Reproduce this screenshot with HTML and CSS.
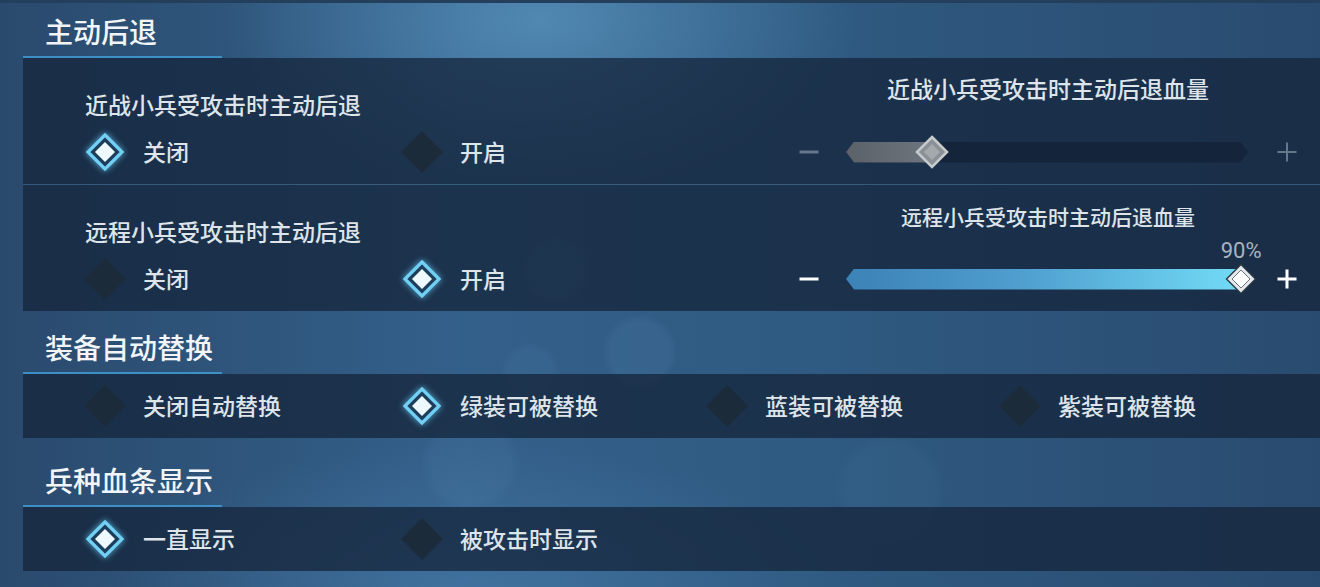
FILE: index.html
```html
<!DOCTYPE html>
<html lang="zh-CN">
<head>
<meta charset="utf-8">
<title>设置</title>
<link rel="stylesheet" href="styles.css">
</head>
<body>
<div class="page">
  <section class="section">
    <div class="sec-head">主动后退</div>
    <div class="panel">
      <div class="row sep">
        <div class="left">
          <div class="label">近战小兵受攻击时主动后退</div>
          <div class="options">
            <div class="opt"><span class="dia"><svg class="sel" width="40" height="40" viewBox="0 0 40 40"><polygon points="20,3 37,20 20,37 3,20" fill="#1d3e5b" stroke="#72d0f4" stroke-width="3.2"/><polygon points="20,10 30,20 20,30 10,20" fill="#eef9ff"/></svg></span><span class="txt">关闭</span></div>
            <div class="opt"><span class="dia"><svg width="44" height="44" viewBox="0 0 44 44"><polygon points="22,1 43,22 22,43 1,22" fill="#1b2b3a"/></svg></span><span class="txt">开启</span></div>
          </div>
        </div>
        <div class="right">
          <div class="s-title big">近战小兵受攻击时主动后退血量</div>
          <div class="slider dim">
            <span class="minus"></span>
            <div class="track" style="--pct:21.4%">
              <div class="shape"><div class="fill"></div></div>
              <div class="thumb"><svg width="34" height="34" viewBox="0 0 34 34"><polygon points="17,2 32,17 17,32 2,17" fill="#8a9096" stroke="#c6cacd" stroke-width="2.6"/><polygon points="17,9 25,17 17,25 9,17" fill="#a4a9ae"/></svg></div>
            </div>
            <span class="plus"></span>
          </div>
        </div>
      </div>
      <div class="row">
        <div class="left">
          <div class="label">远程小兵受攻击时主动后退</div>
          <div class="options">
            <div class="opt"><span class="dia"><svg width="44" height="44" viewBox="0 0 44 44"><polygon points="22,1 43,22 22,43 1,22" fill="#1b2b3a"/></svg></span><span class="txt">关闭</span></div>
            <div class="opt"><span class="dia"><svg class="sel" width="40" height="40" viewBox="0 0 40 40"><polygon points="20,3 37,20 20,37 3,20" fill="#1d3e5b" stroke="#72d0f4" stroke-width="3.2"/><polygon points="20,10 30,20 20,30 10,20" fill="#eef9ff"/></svg></span><span class="txt">开启</span></div>
          </div>
        </div>
        <div class="right">
          <div class="s-title small">远程小兵受攻击时主动后退血量</div>
          <div class="slider">
            <span class="minus"></span>
            <div class="track" style="--pct:98.3%">
              <div class="shape"><div class="fill"></div></div>
              <div class="thumb"><span class="val">90%</span><svg width="34" height="34" viewBox="0 0 34 34"><polygon points="17,1.5 32.5,17 17,32.5 1.5,17" fill="#2b3946"/><polygon points="17,3.5 30.5,17 17,30.5 3.5,17" fill="#e4e8eb"/><polygon points="17,8 26,17 17,26 8,17" fill="#ffffff" stroke="#6b7782" stroke-width="1"/></svg></div>
            </div>
            <span class="plus"></span>
          </div>
        </div>
      </div>
    </div>
  </section>

  <section class="section">
    <div class="sec-head">装备自动替换</div>
    <div class="panel pad">
      <div class="options">
        <div class="opt"><span class="dia"><svg width="44" height="44" viewBox="0 0 44 44"><polygon points="22,1 43,22 22,43 1,22" fill="#1b2b3a"/></svg></span><span class="txt">关闭自动替换</span></div>
        <div class="opt"><span class="dia"><svg class="sel" width="40" height="40" viewBox="0 0 40 40"><polygon points="20,3 37,20 20,37 3,20" fill="#1d3e5b" stroke="#72d0f4" stroke-width="3.2"/><polygon points="20,10 30,20 20,30 10,20" fill="#eef9ff"/></svg></span><span class="txt">绿装可被替换</span></div>
        <div class="opt"><span class="dia"><svg width="44" height="44" viewBox="0 0 44 44"><polygon points="22,1 43,22 22,43 1,22" fill="#1b2b3a"/></svg></span><span class="txt">蓝装可被替换</span></div>
        <div class="opt"><span class="dia"><svg width="44" height="44" viewBox="0 0 44 44"><polygon points="22,1 43,22 22,43 1,22" fill="#1b2b3a"/></svg></span><span class="txt">紫装可被替换</span></div>
      </div>
    </div>
  </section>

  <section class="section s3">
    <div class="sec-head">兵种血条显示</div>
    <div class="panel pad">
      <div class="options">
        <div class="opt"><span class="dia"><svg class="sel" width="40" height="40" viewBox="0 0 40 40"><polygon points="20,3 37,20 20,37 3,20" fill="#1d3e5b" stroke="#72d0f4" stroke-width="3.2"/><polygon points="20,10 30,20 20,30 10,20" fill="#eef9ff"/></svg></span><span class="txt">一直显示</span></div>
        <div class="opt"><span class="dia"><svg width="44" height="44" viewBox="0 0 44 44"><polygon points="22,1 43,22 22,43 1,22" fill="#1b2b3a"/></svg></span><span class="txt">被攻击时显示</span></div>
      </div>
    </div>
  </section>
</div>
</body>
</html>
```

FILE: styles.css
```css
html, body {
  margin: 0;
  padding: 0;
}

body {
  width: 1320px;
  height: 587px;
  overflow: hidden;
  box-sizing: border-box;
  border-top: 3px solid #233f5c;
  font-family: "Noto Sans CJK SC", "Noto Sans", sans-serif;
  font-weight: 500;
  color: #dde4ea;
  background:
    radial-gradient(circle at 556px 270px, rgba(130, 185, 225, 0.09) 0 28px, transparent 36px),
    radial-gradient(circle at 640px 352px, rgba(130, 185, 225, 0.08) 0 30px, transparent 38px),
    radial-gradient(circle at 530px 372px, rgba(130, 185, 225, 0.06) 0 22px, transparent 30px),
    radial-gradient(circle at 470px 462px, rgba(130, 185, 225, 0.06) 0 40px, transparent 50px),
    radial-gradient(circle at 890px 490px, rgba(130, 185, 225, 0.04) 0 45px, transparent 56px),
    radial-gradient(ellipse 440px 240px at 540px 20px, rgba(105, 170, 212, 0.55), transparent 72%),
    radial-gradient(ellipse 520px 220px at 470px 600px, rgba(90, 150, 200, 0.35), transparent 72%),
    linear-gradient(90deg, #2a4a6d 0%, #33608a 35%, #2f5a81 62%, #2a4b70 100%);
}

.page {
  padding: 7px 0 0 23px;
}

.section + .section {
  margin-top: 15px;
}

.section.s3 {
  margin-top: 21px;
}

.sec-head {
  width: 177px;
  padding-left: 22px;
  height: 42px;
  padding-bottom: 4px;
  line-height: 42px;
  font-size: 28px;
  font-weight: 500;
  color: #f1f5f8;
  border-bottom: 2px solid #3d8fc5;
}

.panel {
  background: rgba(21, 37, 59, 0.76);
}

.panel.pad {
  padding: 10px 0 10px 62px;
}

.row {
  display: grid;
  grid-template-columns: 709px 508px;
  padding: 0 0 10px 62px;
}

.row.sep {
  border-bottom: 1px solid rgba(78, 128, 172, 0.55);
}

.left {
  padding-top: 31px;
}

.label {
  font-size: 23px;
  line-height: 30px;
  margin-bottom: 11px;
}

.options {
  display: grid;
  grid-template-columns: 317px 305px 293px auto;
}

.opt {
  display: flex;
  align-items: center;
  gap: 18px;
  height: 44px;
  font-size: 23px;
  line-height: 30px;
}

.txt {
  padding-bottom: 3px;
}

.dia {
  width: 40px;
  height: 44px;
  display: flex;
  align-items: center;
  justify-content: center;
  flex: none;
}

.dia svg {
  flex: none;
}

.dia svg.sel {
  filter: drop-shadow(0 0 3px rgba(100, 205, 245, 0.85));
}

.right {
  display: flex;
  flex-direction: column;
  align-items: center;
  justify-content: flex-end;
}

.s-title.big {
  font-size: 23px;
  line-height: 30px;
  margin-bottom: 27px;
}

.s-title.small {
  font-size: 21px;
  line-height: 28px;
  margin-bottom: 27px;
}

.slider {
  display: flex;
  align-items: center;
  width: 508px;
  height: 44px;
}

.minus, .plus {
  width: 30px;
  height: 30px;
  flex: none;
  position: relative;
}

.minus::before, .plus::before, .plus::after {
  content: "";
  position: absolute;
  left: 50%;
  top: 50%;
  background: #ffffff;
  transform: translate(-50%, -50%);
}

.minus::before, .plus::before {
  width: 19px;
  height: 3px;
}

.plus::after {
  width: 3px;
  height: 19px;
}

.dim .minus::before, .dim .plus::before, .dim .plus::after {
  background: #65788a;
}

.dim .plus::before {
  height: 2px;
}

.dim .plus::after {
  width: 2px;
}

.minus {
  margin-right: 22px;
}

.plus {
  margin-left: 24px;
}

.track {
  position: relative;
  width: 402px;
  height: 21px;
  flex: none;
}

.shape {
  width: 100%;
  height: 100%;
  background: #14243a;
  clip-path: polygon(8px 0, calc(100% - 8px) 0, 100% 50%, calc(100% - 8px) 100%, 8px 100%, 0 50%);
}

.fill {
  width: var(--pct);
  height: 100%;
  background: linear-gradient(90deg, #3c82b6 0%, #4f9fcf 45%, #72dbf6 100%);
}

.dim .fill {
  background: linear-gradient(90deg, #5a6168 0%, #6f757c 100%);
}

.thumb {
  position: absolute;
  left: var(--pct);
  top: 50%;
  width: 34px;
  height: 34px;
  transform: translate(-50%, -50%);
}

.thumb svg {
  display: block;
}

.val {
  position: absolute;
  bottom: calc(100% - 1px);
  left: 50%;
  transform: translateX(-50%);
  font-family: Roboto, "Noto Sans", sans-serif;
  font-weight: 400;
  font-size: 22px;
  line-height: 24px;
  color: #a7b4c0;
}
```
